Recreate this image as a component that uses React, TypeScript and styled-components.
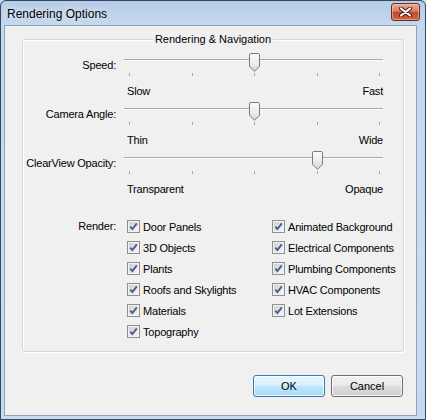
import styled, { createGlobalStyle } from 'styled-components';

const GlobalStyle = createGlobalStyle`
  html, body {
    margin: 0;
    padding: 0;
    overflow: hidden;
    background: #c9dbef;
  }
  body {
    font-family: "Liberation Sans", Arial, sans-serif;
    font-size: 11px;
    color: #000;
  }
`;

const sliders = [
    { label: 'Speed:', min: 'Slow', max: 'Fast', value: 2 },
    { label: 'Camera Angle:', min: 'Thin', max: 'Wide', value: 2 },
    { label: 'ClearView Opacity:', min: 'Transparent', max: 'Opaque', value: 3 },
];

const renderLeft = ['Door Panels', '3D Objects', 'Plants', 'Roofs and Skylights', 'Materials', 'Topography'];
const renderRight = ['Animated Background', 'Electrical Components', 'Plumbing Components', 'HVAC Components', 'Lot Extensions'];

// tick centres across the 259px track
const tickPos = (i: number) => 5 + i * 62.5;

const Thumb = () => (
    <svg width="11" height="19" viewBox="0 0 11 19">
        <defs>
            <linearGradient id="thumbFill" x1="0" y1="0" x2="0" y2="1">
                <stop offset="0" stopColor="#fbfbfb" />
                <stop offset="0.55" stopColor="#ececec" />
                <stop offset="1" stopColor="#d4d4d4" />
            </linearGradient>
        </defs>
        <path
            d="M1.8 0.5 H9.2 Q10.5 0.5 10.5 1.8 V13.3 L5.5 18.3 L0.5 13.3 V1.8 Q0.5 0.5 1.8 0.5 Z"
            fill="url(#thumbFill)"
            stroke="#7b7b7b"
        />
    </svg>
);

const CheckIcon = () => (
    <svg width="13" height="13" viewBox="0 0 13 13">
        <defs>
            <linearGradient id="checkFill" x1="0" y1="0" x2="1" y2="1">
                <stop offset="0" stopColor="#cfd1d4" />
                <stop offset="1" stopColor="#f4f5f6" />
            </linearGradient>
        </defs>
        <rect x="0.5" y="0.5" width="12" height="12" fill="#f3f3f3" stroke="#8e8f8f" />
        <rect x="2" y="2" width="9" height="9" fill="url(#checkFill)" />
        <path d="M3.3 6.6 L5.4 9.1 L9.8 3.4" fill="none" stroke="#4b5d88" strokeWidth="1.9" />
    </svg>
);

const CloseIcon = () => (
    <svg width="13" height="10" viewBox="0 0 13 10">
        <path d="M2 1.5 L11 8.5 M11 1.5 L2 8.5" stroke="#4a1a12" strokeWidth="4" strokeLinecap="round" />
        <path d="M2 1.5 L11 8.5 M11 1.5 L2 8.5" stroke="#ffffff" strokeWidth="2.2" strokeLinecap="round" />
    </svg>
);

const App = () => {
    return (
        <>
            <GlobalStyle />
            <Window>
                <TitleBar>
                    <Title>Rendering Options</Title>
                    <CloseButton>
                        <CloseIcon />
                    </CloseButton>
                </TitleBar>
                <Client>
                    <Group>
                        <Legend>Rendering &amp; Navigation</Legend>
                        {sliders.map((s) => (
                            <FormRow key={s.label}>
                                <FieldLabel $top={6}>{s.label}</FieldLabel>
                                <div>
                                    <Track>
                                        <Groove />
                                        {[0, 1, 2, 3, 4].map((i) => (
                                            <Tick key={i} $left={tickPos(i)} />
                                        ))}
                                        <ThumbWrap $left={tickPos(s.value) - 5}>
                                            <Thumb />
                                        </ThumbWrap>
                                    </Track>
                                    <RangeLabels>
                                        <span>{s.min}</span>
                                        <span>{s.max}</span>
                                    </RangeLabels>
                                </div>
                            </FormRow>
                        ))}
                        <RenderRow>
                            <FieldLabel $top={4}>Render:</FieldLabel>
                            <CheckGrid>
                                {[...renderLeft, ...renderRight].map((name) => (
                                    <CheckItem key={name}>
                                        <CheckIcon />
                                        <span>{name}</span>
                                    </CheckItem>
                                ))}
                            </CheckGrid>
                        </RenderRow>
                    </Group>
                    <ButtonRow>
                        <DialogButton $primary>OK</DialogButton>
                        <DialogButton>Cancel</DialogButton>
                    </ButtonRow>
                </Client>
            </Window>
        </>
    );
};

export default App;

const Window = styled.div`
    width: 426px;
    height: 420px;
    box-sizing: border-box;
    border: 1px solid #34475c;
    border-radius: 6px 6px 0 0;
    background: linear-gradient(#b6cde7 0px, #c4d8ee 24px, #cadcf0 60%, #c6d9ee 100%);
    padding: 0 8px 3px 3px;
    display: flex;
    flex-direction: column;
`;

const TitleBar = styled.div`
    height: 24px;
    display: flex;
    align-items: flex-start;
    justify-content: space-between;
    padding-left: 3px;
`;

const Title = styled.div`
    font-size: 12px;
    line-height: 14px;
    padding-top: 6px;
    color: #000;
    text-shadow: 0 0 6px rgba(255, 255, 255, 0.9);
`;

const CloseButton = styled.div`
    width: 29px;
    height: 18px;
    box-sizing: border-box;
    margin-top: 2px;
    margin-right: -3px;
    border: 1px solid #6a2a20;
    border-radius: 3px;
    background: linear-gradient(#e9ab9a 0%, #d77d66 45%, #c14a2e 52%, #cf6640 100%);
    box-shadow: inset 0 0 0 1px rgba(255, 220, 210, 0.45);
    display: flex;
    align-items: center;
    justify-content: center;
`;

const Client = styled.div`
    flex: 1;
    border: 1px solid #8ea4bd;
    background: #f0f0f0;
    display: flex;
    flex-direction: column;
`;

const Group = styled.fieldset`
    margin: 7px 12px 0 17px;
    padding: 7px 10px 9px 10px;
    min-width: 0;
    border: 1px solid #d5d9dd;
    border-radius: 3px;
    box-shadow: inset 1px 1px 0 #ffffff, 1px 1px 0 #ffffff;
`;

const Legend = styled.legend`
    margin: 0 auto;
    padding: 0 2px;
    line-height: 13px;
    background: #f0f0f0;
`;

const FormRow = styled.div`
    display: grid;
    grid-template-columns: 83px 259px;
    column-gap: 8px;
`;

const RenderRow = styled(FormRow)`
    margin-top: 16px;
`;

const FieldLabel = styled.div<{ $top: number }>`
    display: flex;
    justify-content: flex-end;
    line-height: 13px;
    padding-top: ${(p) => p.$top}px;
    white-space: nowrap;
    letter-spacing: -0.2px;
`;

const Track = styled.div`
    position: relative;
    height: 24px;
`;

const Groove = styled.div`
    position: absolute;
    top: 6px;
    left: 0;
    right: 0;
    height: 1px;
    background: #a9a9a9;
    border-bottom: 1px solid #fdfdfd;
`;

const Tick = styled.div<{ $left: number }>`
    position: absolute;
    top: 20px;
    left: ${(p) => p.$left}px;
    width: 1px;
    height: 3px;
    background: #a6a6a6;
`;

const ThumbWrap = styled.div<{ $left: number }>`
    position: absolute;
    top: 0;
    left: ${(p) => p.$left}px;
    width: 11px;
    height: 19px;
    svg {
        display: block;
    }
`;

const RangeLabels = styled.div`
    display: flex;
    justify-content: space-between;
    padding-left: 3px;
    margin: 8px 0 4px;
    line-height: 13px;
    letter-spacing: -0.2px;
`;

const CheckGrid = styled.div`
    display: grid;
    grid-template-columns: 145px auto;
    grid-template-rows: repeat(6, 21px);
    grid-auto-flow: column;
    padding-left: 3px;
`;

const CheckItem = styled.div`
    display: flex;
    align-items: center;
    gap: 3px;
    white-space: nowrap;
    letter-spacing: -0.2px;
    svg {
        display: block;
        flex: none;
    }
`;

const ButtonRow = styled.div`
    display: flex;
    justify-content: flex-end;
    gap: 6px;
    margin-top: 23px;
    padding-right: 13px;
`;

const DialogButton = styled.button<{ $primary?: boolean }>`
    width: 72px;
    height: 22px;
    box-sizing: border-box;
    padding: 0;
    font-family: "Liberation Sans", Arial, sans-serif;
    font-size: 11px;
    color: #000;
    border-radius: 3px;
    border: 1px solid ${(p) => (p.$primary ? '#3d7bad' : '#707070')};
    background: ${(p) =>
        p.$primary
            ? 'linear-gradient(#eaf6fd 0%, #d9f0fc 45%, #bee6fd 52%, #a7d9f5 100%)'
            : 'linear-gradient(#f2f2f2 0%, #ebebeb 45%, #dddddd 52%, #cfcfcf 100%)'};
    box-shadow: inset 0 0 0 1px rgba(255, 255, 255, 0.75);
`;
